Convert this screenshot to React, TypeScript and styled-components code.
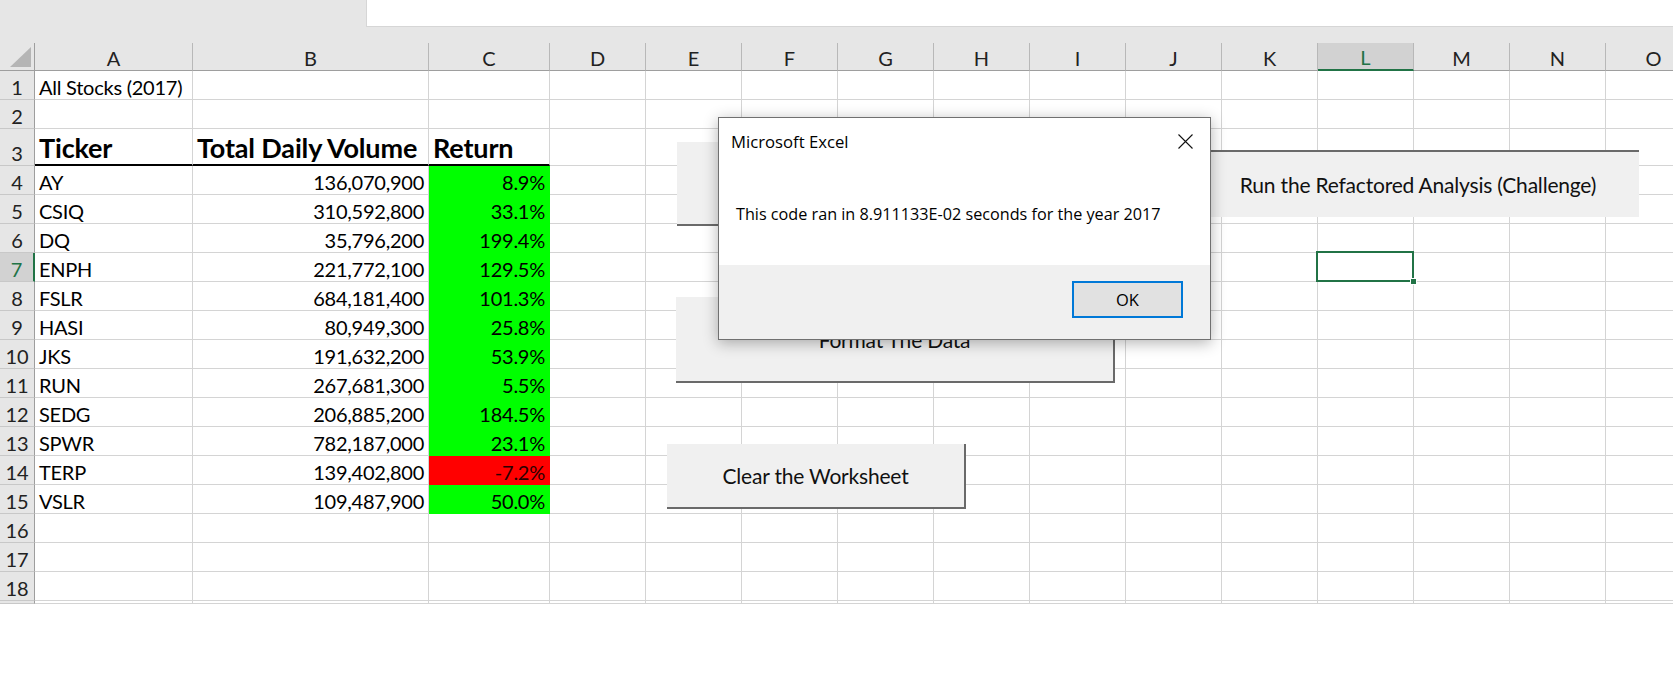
import React from "react";
import styled, { createGlobalStyle } from "styled-components";

const CELL_FONT = `Lato, "Liberation Sans", sans-serif`;
const UI_FONT = `"Open Sans", "Noto Sans", "Liberation Sans", sans-serif`;
const GRID = "#d4d4d4";
const HEAD_LINE = "#9e9e9e";
const XL_GREEN = "#217346";

const GlobalStyle = createGlobalStyle`
  html, body { margin: 0; padding: 0; background: #fff; }
  body { width: 1673px; height: 689px; overflow: hidden; font-family: ${CELL_FONT}; }
  *, *::before, *::after { box-sizing: border-box; }
`;

const Page = styled.div`
  display: flex;
  flex-direction: column;
  width: 1673px;
  height: 689px;
  overflow: hidden;
  background: #fff;
`;

const TopBar = styled.div`
  display: flex;
  flex: 0 0 43px;
  background: #e6e6e6;
`;

const TopSpacer = styled.div`
  flex: 0 0 366px;
`;

const FormulaBox = styled.div`
  flex: 1;
  height: 27px;
  background: #fff;
  border-left: 1px solid #d6d6d6;
  border-bottom: 1px solid #d6d6d6;
`;

const Sheet = styled.div`
  position: relative;
  flex: 1;
  overflow: hidden;
`;

const Grid = styled.div`
  display: grid;
  grid-template-columns: 35px 158px 236px 121px repeat(12, 96px);
  grid-template-rows: 28px 29px 29px 37px repeat(15, 29px) 2px;
  width: max-content;
`;

const Corner = styled.div`
  background: #e6e6e6;
  border-right: 1px solid ${HEAD_LINE};
  border-bottom: 1px solid ${HEAD_LINE};
  display: flex;
  align-items: flex-end;
  justify-content: flex-end;
  padding: 0 3px 3px 0;
`;

const CornerMark = styled.svg`
  display: block;
`;

const ColHead = styled.div<{ $active?: boolean }>`
  display: flex;
  align-items: flex-end;
  justify-content: center;
  padding-bottom: 2px;
  background: ${(p) => (p.$active ? "#d2d2d2" : "#e6e6e6")};
  border-right: 1px solid #b8b8b8;
  border-bottom: ${(p) => (p.$active ? `2px solid ${XL_GREEN}` : `1px solid ${HEAD_LINE}`)};
  color: ${(p) => (p.$active ? XL_GREEN : "#222")};
  font-family: ${CELL_FONT};
  font-size: 20px;
  line-height: 1;
`;

const RowHead = styled.div<{ $active?: boolean }>`
  display: flex;
  align-items: flex-end;
  justify-content: center;
  padding-bottom: 2px;
  background: ${(p) => (p.$active ? "#d2d2d2" : "#e6e6e6")};
  border-right: ${(p) => (p.$active ? `2px solid ${XL_GREEN}` : `1px solid ${HEAD_LINE}`)};
  border-bottom: 1px solid #c8c8c8;
  color: ${(p) => (p.$active ? XL_GREEN : "#222")};
  font-family: ${CELL_FONT};
  font-size: 20px;
  letter-spacing: -0.2px;
  line-height: 1;
  overflow: hidden;
`;

const Cell = styled.div<{
  $right?: boolean;
  $bold?: boolean;
  $fill?: string;
  $rule?: boolean;
  $selected?: boolean;
  $ink?: string;
}>`
  position: relative;
  display: flex;
  align-items: flex-end;
  justify-content: ${(p) => (p.$right ? "flex-end" : "flex-start")};
  padding: 0 4px ${(p) => (p.$bold ? 3 : 2)}px 4px;
  background: ${(p) => p.$fill ?? "#fff"};
  border-right: 1px solid ${(p) => p.$fill ?? GRID};
  border-bottom: ${(p) => (p.$rule ? "2px solid #000" : `1px solid ${p.$fill ?? GRID}`)};
  color: ${(p) => p.$ink ?? "#000"};
  font-family: ${CELL_FONT};
  font-size: ${(p) => (p.$bold ? 27 : 20)}px;
  font-weight: ${(p) => (p.$bold ? 700 : 400)};
  letter-spacing: ${(p) => (p.$bold ? -0.15 : -0.25)}px;
  line-height: 1;
  white-space: nowrap;

  ${(p) =>
    p.$selected &&
    `
    &::after {
      content: "";
      position: absolute;
      left: -2px; top: -2px; right: -1px; bottom: -1px;
      border: 2px solid ${XL_GREEN};
      z-index: 1;
    }
    &::before {
      content: "";
      position: absolute;
      right: -4px; bottom: -4px;
      width: 7px; height: 7px;
      background: ${XL_GREEN};
      border: 1px solid #fff;
      z-index: 2;
    }
  `}
`;

const FormButton = styled.div<{
  $x: number;
  $y: number;
  $w: number;
  $h: number;
  $topEdge?: boolean;
}>`
  position: absolute;
  left: ${(p) => p.$x}px;
  top: ${(p) => p.$y}px;
  width: ${(p) => p.$w}px;
  height: ${(p) => p.$h}px;
  display: flex;
  align-items: center;
  justify-content: center;
  background: #f0f0f0;
  border-right: ${(p) => (p.$topEdge ? "0" : "2px solid #6a6a6a")};
  border-bottom: ${(p) => (p.$topEdge ? "0" : "2px solid #6a6a6a")};
  border-top: ${(p) => (p.$topEdge ? "2px solid #6a6a6a" : "0")};
  color: #111;
  font-family: ${CELL_FONT};
  font-size: 21px;
  letter-spacing: -0.2px;
  z-index: 2;
`;

const Dialog = styled.div`
  position: absolute;
  left: 718px;
  top: 74px;
  width: 493px;
  height: 223px;
  display: flex;
  flex-direction: column;
  background: #fff;
  border: 1px solid #707070;
  box-shadow: 0 3px 14px rgba(0, 0, 0, 0.3);
  font-family: ${UI_FONT};
  color: #000;
  z-index: 5;
`;

const DialogBody = styled.div`
  flex: 0 0 147px;
  display: flex;
  flex-direction: column;
`;

const TitleRow = styled.div`
  display: flex;
  align-items: center;
  justify-content: space-between;
  height: 46px;
  padding: 0 17px 0 12px;
`;

const Title = styled.span`
  font-size: 16.7px;
`;

const CloseIcon = styled.svg`
  display: block;
`;

const Message = styled.div`
  margin-top: 38px;
  padding-left: 17px;
  font-size: 16.2px;
  line-height: 24px;
  white-space: nowrap;
`;

const DialogFooter = styled.div`
  flex: 1;
  display: flex;
  justify-content: flex-end;
  align-items: flex-start;
  padding: 16px 27px 0 0;
  background: #f0f0f0;
`;

const OkButton = styled.div`
  width: 111px;
  height: 37px;
  display: flex;
  align-items: center;
  justify-content: center;
  background: #e1e1e1;
  border: 2px solid #0078d7;
  font-size: 16.5px;
`;

const COLS = ["A", "B", "C", "D", "E", "F", "G", "H", "I", "J", "K", "L", "M", "N", "O"];

type Stock = { t: string; v: string; r: string; neg?: boolean };

const STOCKS: Stock[] = [
  { t: "AY", v: "136,070,900", r: "8.9%" },
  { t: "CSIQ", v: "310,592,800", r: "33.1%" },
  { t: "DQ", v: "35,796,200", r: "199.4%" },
  { t: "ENPH", v: "221,772,100", r: "129.5%" },
  { t: "FSLR", v: "684,181,400", r: "101.3%" },
  { t: "HASI", v: "80,949,300", r: "25.8%" },
  { t: "JKS", v: "191,632,200", r: "53.9%" },
  { t: "RUN", v: "267,681,300", r: "5.5%" },
  { t: "SEDG", v: "206,885,200", r: "184.5%" },
  { t: "SPWR", v: "782,187,000", r: "23.1%" },
  { t: "TERP", v: "139,402,800", r: "-7.2%", neg: true },
  { t: "VSLR", v: "109,487,900", r: "50.0%" },
];

const ACTIVE_ROW = 7;
const ACTIVE_COL = 11; // L

function renderRow(row: number) {
  const cells: React.ReactNode[] = [];
  cells.push(
    <RowHead key={`h${row}`} $active={row === ACTIVE_ROW}>
      {row <= 18 ? row : ""}
    </RowHead>
  );
  const stock = row >= 4 && row <= 15 ? STOCKS[row - 4] : undefined;
  for (let c = 0; c < COLS.length; c++) {
    const key = `${COLS[c]}${row}`;
    const selected = row === ACTIVE_ROW && c === ACTIVE_COL;
    if (row === 1 && c === 0) {
      cells.push(<Cell key={key}>All Stocks (2017)</Cell>);
    } else if (row === 3 && c < 3) {
      const label = ["Ticker", "Total Daily Volume", "Return"][c];
      cells.push(
        <Cell key={key} $bold $rule>
          {label}
        </Cell>
      );
    } else if (stock && c === 0) {
      cells.push(<Cell key={key}>{stock.t}</Cell>);
    } else if (stock && c === 1) {
      cells.push(
        <Cell key={key} $right>
          {stock.v}
        </Cell>
      );
    } else if (stock && c === 2) {
      cells.push(
        <Cell
          key={key}
          $right
          $fill={stock.neg ? "#ff0000" : "#00ff00"}
          $ink={stock.neg ? "#2a0000" : "#000"}
        >
          {stock.r}
        </Cell>
      );
    } else {
      cells.push(<Cell key={key} $selected={selected} />);
    }
  }
  return cells;
}

export default function App() {
  const rows: React.ReactNode[] = [];
  for (let r = 1; r <= 19; r++) rows.push(...renderRow(r));

  return (
    <>
      <GlobalStyle />
      <Page>
        <TopBar>
          <TopSpacer />
          <FormulaBox />
        </TopBar>
        <Sheet>
          <Grid>
            <Corner>
              <CornerMark width="21" height="20" viewBox="0 0 21 20">
                <polygon points="21,0 21,20 0,20" fill="#b5b5b5" />
              </CornerMark>
            </Corner>
            {COLS.map((c, i) => (
              <ColHead key={c} $active={i === ACTIVE_COL}>
                {c}
              </ColHead>
            ))}
            {rows}
          </Grid>

          <FormButton $x={677} $y={99} $w={438} $h={84} />
          <FormButton $x={1197} $y={107} $w={442} $h={67} $topEdge>
            Run the Refactored Analysis (Challenge)
          </FormButton>
          <FormButton $x={676} $y={254} $w={439} $h={86}>
            Format The Data
          </FormButton>
          <FormButton $x={667} $y={401} $w={299} $h={65}>
            Clear the Worksheet
          </FormButton>

          <Dialog>
            <DialogBody>
              <TitleRow>
                <Title>Microsoft Excel</Title>
                <CloseIcon width="15" height="15" viewBox="0 0 15 15">
                  <path d="M0.5 0.5 L14.5 14.5 M14.5 0.5 L0.5 14.5" stroke="#111" strokeWidth="1.1" fill="none" />
                </CloseIcon>
              </TitleRow>
              <Message>This code ran in 8.911133E-02 seconds for the year 2017</Message>
            </DialogBody>
            <DialogFooter>
              <OkButton>OK</OkButton>
            </DialogFooter>
          </Dialog>
        </Sheet>
      </Page>
    </>
  );
}
